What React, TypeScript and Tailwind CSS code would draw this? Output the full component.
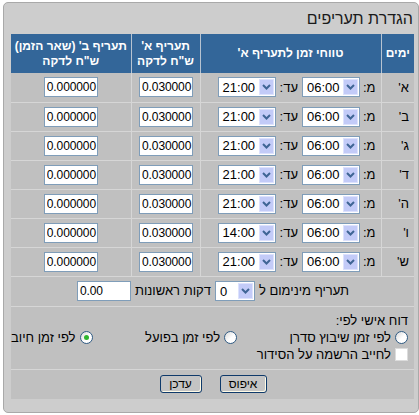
import React from "react";

const FONT = "font-['Liberation_Sans','DejaVu_Sans',Arial,sans-serif]";

function Chevron() {
  return (
    <svg width="9" height="6" viewBox="0 0 9 6">
      <path d="M1 1 L4.5 4.5 L8 1" fill="none" stroke="#3f6595" strokeWidth="2" />
    </svg>
  );
}

function Sel({ value, w }: { value: string; w: string }) {
  return (
    <div
      dir="ltr"
      className={`${w} h-[20px] bg-white border border-[#7f9db9] flex items-center justify-between pl-[4px] pr-[1px] text-[13px] text-black leading-none`}
    >
      <span>{value}</span>
      <span className="w-[15px] h-[16px] bg-[#c3cbf8] border border-[#dde2fd] flex items-center justify-center">
        <Chevron />
      </span>
    </div>
  );
}

function TextBox({ value }: { value: string }) {
  return (
    <input
      dir="ltr"
      readOnly
      value={value}
      className="w-[54px] h-[20px] bg-white border border-[#7f9db9] pl-[2px] pr-0 text-[12px] tracking-[-0.1px] text-black outline-none"
    />
  );
}

function Radio({ checked }: { checked?: boolean }) {
  return (
    <span className="w-[13px] h-[13px] rounded-full border border-[#2f5a82] bg-[linear-gradient(135deg,#d8d8d8_0%,#ffffff_55%,#ffffff_100%)] flex items-center justify-center shrink-0">
      {checked && <span className="w-[5px] h-[5px] rounded-full bg-[#2fb52f]" />}
    </span>
  );
}

const rows = [
  { d: "א'", to: "21:00" },
  { d: "ב'", to: "21:00" },
  { d: "ג'", to: "21:00" },
  { d: "ד'", to: "21:00" },
  { d: "ה'", to: "21:00" },
  { d: "ו'", to: "14:00" },
  { d: "ש'", to: "21:00" },
];

export default function App() {
  return (
    <div dir="rtl" className={`w-[419px] h-[415px] bg-white pt-[2px] ${FONT}`}>
      <div className="ml-[1px] w-[416px] h-[411px] border border-[#a9a9a9] rounded-[5px] bg-[#cdcdcd] pl-[5px] pr-[4px]">
        <div className="h-[31px] flex items-center pr-[1px] text-[16px] text-[#1a1a1a]">
          הגדרת תעריפים
        </div>
        <table className="w-[403px] table-fixed border-collapse bg-[#c0c0c0] text-[12px] text-black">
          <colgroup>
            <col className="w-[33px]" />
            <col className="w-[181px]" />
            <col className="w-[69px]" />
            <col className="w-[120px]" />
          </colgroup>
          <thead>
            <tr className="h-[39px] bg-[#336699] text-white font-bold text-[12px] leading-[15px]">
              <th className="border-l border-[#b7c3d1] font-bold text-center">ימים</th>
              <th className="border-l border-[#b7c3d1] font-bold text-center">טווחי זמן לתעריף א'</th>
              <th className="border-l border-[#b7c3d1] font-bold text-center">
                תעריף א'
                <br />
                ש"ח לדקה
              </th>
              <th className="font-bold text-center">
                תעריף ב' (שאר הזמן)
                <br />
                ש"ח לדקה
              </th>
            </tr>
          </thead>
          <tbody>
            {rows.map((r) => (
              <tr key={r.d} className="h-[29px] border-b border-[#d6d6d6]">
                <td className="border-l border-[#d6d6d6] text-right pr-[5px] text-[13px]">{r.d}</td>
                <td className="border-l border-[#d6d6d6]">
                  <div className="flex items-center gap-[3px] pr-[5px]">
                    <span className="text-[13px]">מ:</span>
                    <Sel value="06:00" w="w-[58px]" />
                    <span className="text-[13px] mx-[1px]">עד:</span>
                    <Sel value={r.to} w="w-[58px]" />
                  </div>
                </td>
                <td className="border-l border-[#d6d6d6]">
                  <div className="flex justify-center pl-[1px]">
                    <TextBox value="0.030000" />
                  </div>
                </td>
                <td>
                  <div className="flex justify-center">
                    <TextBox value="0.000000" />
                  </div>
                </td>
              </tr>
            ))}
            <tr className="h-[30px] border-b border-[#d6d6d6]">
              <td colSpan={4}>
                <div className="flex items-center justify-center gap-[4px] text-[13px] pl-[1px]">
                  <span>תעריף מינימום ל</span>
                  <Sel value="0" w="w-[40px]" />
                  <span>דקות ראשונות</span>
                  <TextBox value="0.00" />
                </div>
              </td>
            </tr>
            <tr className="h-[63px] border-b border-[#d6d6d6]">
              <td colSpan={4} className="align-top">
                <div className="pt-[6px] pr-[6px] text-[13px] leading-[16px]">
                  <div>דוח אישי לפי:</div>
                  <div className="flex justify-between items-center mt-[1px]">
                    <label className="flex items-center gap-[4px]">
                      <Radio />
                      <span>לפי זמן שיבוץ סדרן</span>
                    </label>
                    <label className="flex items-center gap-[4px]">
                      <Radio />
                      <span>לפי זמן בפועל</span>
                    </label>
                    <label className="flex items-center gap-[4px]">
                      <Radio checked />
                      <span>לפי זמן חיוב</span>
                    </label>
                  </div>
                  <label className="flex items-center gap-[4px] mt-[1px]">
                    <span className="w-[13px] h-[13px] bg-white border border-[#dcdcdc] shrink-0" />
                    <span>לחייב הרשמה על הסידור</span>
                  </label>
                </div>
              </td>
            </tr>
            <tr className="h-[30px]">
              <td colSpan={4}>
                <div className="flex justify-center gap-[18px] pl-[1px]">
                  <button className="w-[47px] h-[18px] rounded-[3px] border border-[#0f3a6b] bg-[#c4c4c4] shadow-[inset_-1px_-1px_0_#fffbe6] text-[12px] leading-none text-black">
                    איפוס
                  </button>
                  <button className="w-[42px] h-[18px] rounded-[3px] border border-[#0f3a6b] bg-[#c4c4c4] shadow-[inset_-1px_-1px_0_#fffbe6] text-[12px] leading-none text-black">
                    עדכן
                  </button>
                </div>
              </td>
            </tr>
          </tbody>
        </table>
      </div>
    </div>
  );
}
